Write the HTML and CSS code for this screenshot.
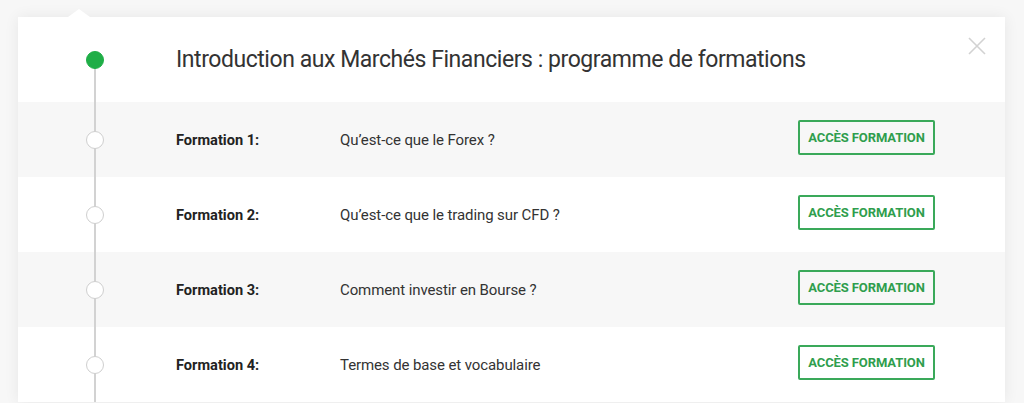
FILE: index.html
```html
<!DOCTYPE html>
<html lang="fr">
<head>
<meta charset="utf-8">
<link rel="stylesheet" href="styles.css">
</head>
<body>
<div class="page">
  <div class="card">
    <span class="notch"></span>
    <button class="close" aria-label="Fermer">
      <svg width="18" height="18" viewBox="0 0 18 18"><path d="M1 1L17 17M17 1L1 17" stroke="#d2d2d2" stroke-width="1.6" fill="none"/></svg>
    </button>
    <div class="head">
      <div class="mark mark-first"><span class="dot dot-on"></span></div>
      <h1 class="title">Introduction aux Marchés Financiers : programme de formations</h1>
    </div>
    <div class="row alt">
      <div class="mark"><span class="dot"></span></div>
      <div class="label">Formation 1:</div>
      <div class="desc">Qu’est-ce que le Forex ?</div>
      <a class="btn">ACCÈS FORMATION</a>
    </div>
    <div class="row">
      <div class="mark"><span class="dot"></span></div>
      <div class="label">Formation 2:</div>
      <div class="desc">Qu’est-ce que le trading sur CFD ?</div>
      <a class="btn">ACCÈS FORMATION</a>
    </div>
    <div class="row alt">
      <div class="mark"><span class="dot"></span></div>
      <div class="label">Formation 3:</div>
      <div class="desc">Comment investir en Bourse ?</div>
      <a class="btn">ACCÈS FORMATION</a>
    </div>
    <div class="row">
      <div class="mark"><span class="dot"></span></div>
      <div class="label">Formation 4:</div>
      <div class="desc">Termes de base et vocabulaire</div>
      <a class="btn">ACCÈS FORMATION</a>
    </div>
  </div>
</div>
</body>
</html>
```
FILE: styles.css
```css
* { box-sizing: border-box; }
html, body { margin: 0; height: 100%; }
body {
  background: #f7f7f7;
  font-family: Roboto, "Liberation Sans", sans-serif;
  color: #333;
  overflow: hidden;
}
.page {
  padding: 17px 19px 0 18px;
}
.card {
  position: relative;
  background: #fff;
  box-shadow: 0 0 14px rgba(0, 0, 0, 0.07);
}
.notch {
  position: absolute;
  top: -8px;
  left: 50px;
  width: 0;
  height: 0;
  border-left: 11px solid transparent;
  border-right: 11px solid transparent;
  border-bottom: 8px solid #fff;
}
.close {
  position: absolute;
  top: 20px;
  left: 950px;
  padding: 0;
  border: 0;
  background: none;
  width: 18px;
  height: 18px;
}
.close svg { display: block; }
.head, .row {
  display: flex;
  align-items: center;
}
.head { height: 85px; }
.row { height: 75px; }
.row.alt { background: #f7f7f7; }
.mark {
  position: relative;
  align-self: stretch;
  width: 158px;
  flex: none;
  display: flex;
  align-items: center;
  padding-left: 68px;
}
.mark::before {
  content: "";
  position: absolute;
  left: 76px;
  top: 0;
  bottom: 0;
  width: 1.5px;
  background: #d2d2d2;
}
.mark-first::before { top: 50%; }
.dot {
  position: relative;
  width: 18px;
  height: 18px;
  border-radius: 50%;
  background: #fff;
  border: 1.5px solid #cfcfcf;
}
.dot-on {
  background: #1fae47;
  border-color: #1fae47;
  margin-top: 1px;
}
.title {
  margin: 0;
  font-weight: 400;
  font-size: 23px;
  letter-spacing: -0.45px;
  color: #333;
  margin-top: -1px;
}
.label {
  width: 164px;
  flex: none;
  font-weight: 700;
  font-size: 14.6px;
  color: #222;
}
.desc {
  flex: 1;
  font-size: 15px;
  letter-spacing: -0.1px;
  color: #333;
}
.btn {
  flex: none;
  width: 137px;
  height: 35px;
  margin-right: 70px;
  border: 2px solid #3aa95a;
  border-radius: 2px;
  display: flex;
  align-items: center;
  justify-content: center;
  color: #2f9e4d;
  font-weight: 700;
  font-size: 13px;
  letter-spacing: -0.1px;
  margin-top: -5px;
}
```
